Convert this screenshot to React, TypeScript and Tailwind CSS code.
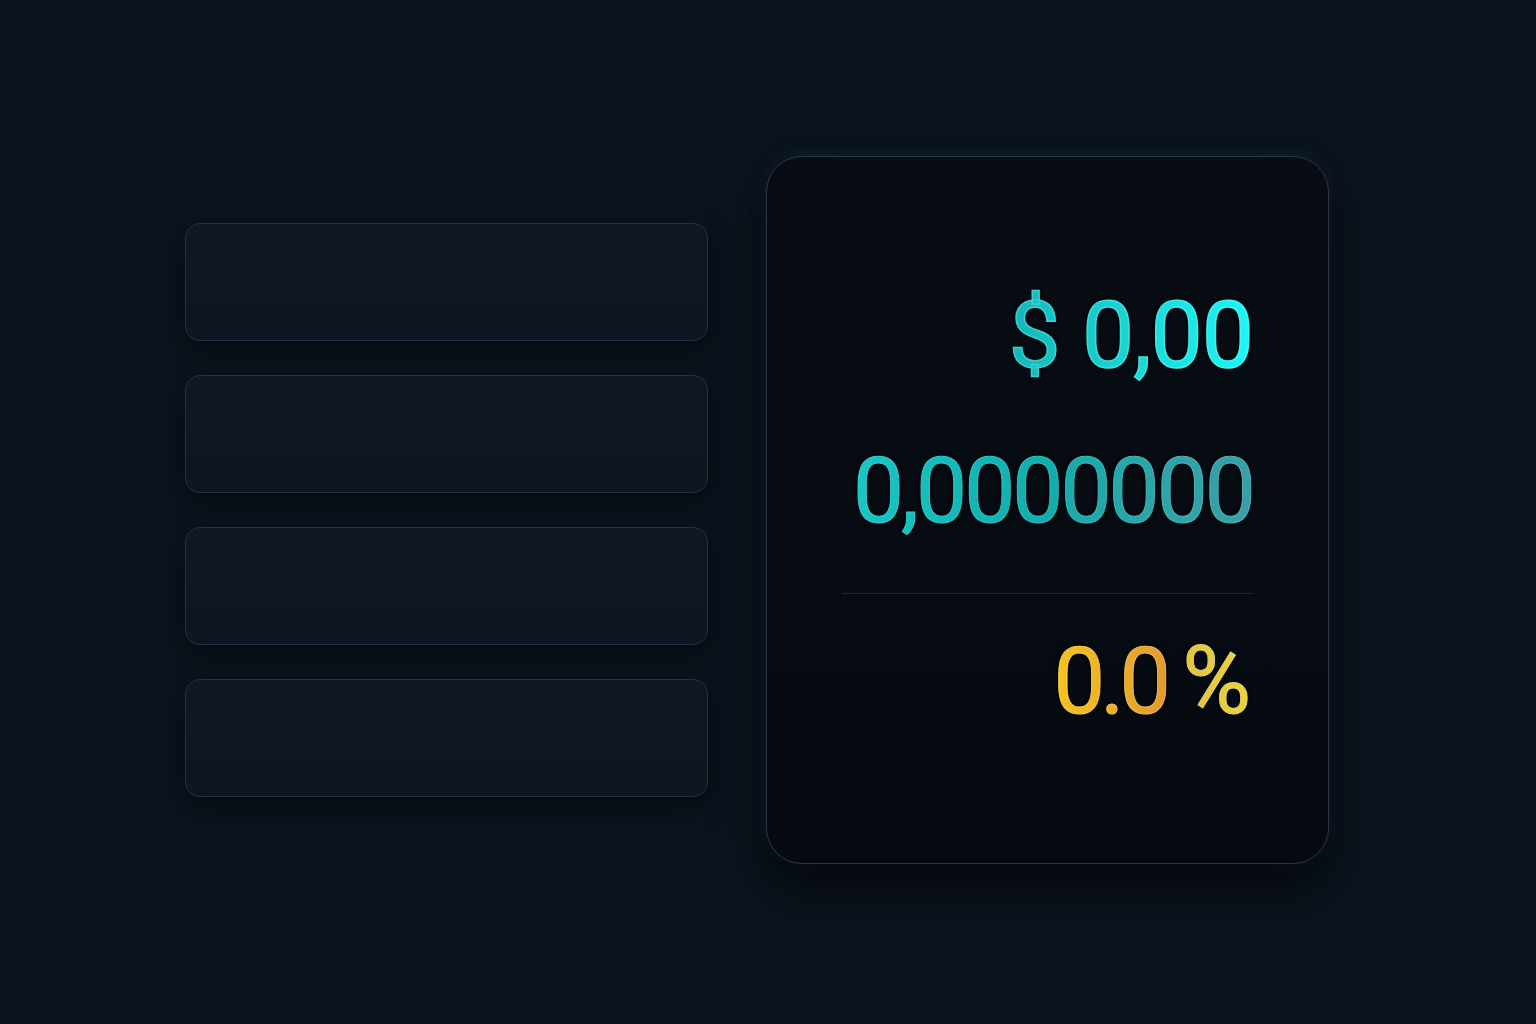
const rows = [0, 1, 2, 3];

const App = () => {
    return (
        <div
            className="h-screen w-full flex items-center pl-[185px] pb-[4px] bg-[#0b131d] overflow-hidden"
            style={{ fontFamily: 'Roboto, "Noto Sans", sans-serif' }}
        >
            {/* Empty input rows */}
            <div className="flex flex-col gap-[34px] w-[523px]">
                {rows.map((r) => (
                    <div
                        key={r}
                        className="h-[118px] rounded-[15px] border border-[#233244] bg-gradient-to-b from-[#0f1824] to-[#0d1620] shadow-[0_10px_24px_rgba(0,0,0,0.45)]"
                    />
                ))}
            </div>

            {/* Result card */}
            <div className="ml-[58px] w-[563px] h-[708px] rounded-[36px] border border-[#283847] bg-gradient-to-b from-[#080d14] to-[#060a10] shadow-[0_-4px_18px_rgba(40,120,160,0.12),0_24px_50px_rgba(0,0,0,0.6)] flex flex-col px-[75px]">
                <div className="mt-[132px] flex justify-end">
                    <span className="text-[93px] leading-[1] tracking-[-1px] bg-gradient-to-r from-[#16b6b6] to-[#1ef6f6] bg-clip-text text-transparent [-webkit-text-stroke:1.5px_rgba(140,255,255,0.3)] drop-shadow-[0_0_2px_rgba(0,0,0,1)]">
                        $ 0,00
                    </span>
                </div>
                <div className="mt-[64px] flex justify-end">
                    <span className="text-[91px] leading-[1] tracking-[-3px] bg-gradient-to-r from-[#19c6c6] via-[#13abab] to-[#3a9ea6] bg-clip-text text-transparent [-webkit-text-stroke:1px_rgba(140,255,255,0.2)] drop-shadow-[0_0_2px_rgba(0,0,0,1)]">
                        0,0000000
                    </span>
                </div>
                <div className="mt-[56px] h-px bg-[#1c2835]" />
                <div className="mt-[40px] flex justify-end items-baseline">
                    <span className="text-[92px] leading-[1] tracking-[-5px] bg-gradient-to-r from-[#f6c41e] to-[#e09c2e] bg-clip-text text-transparent [-webkit-text-stroke:1px_rgba(255,240,180,0.3)] drop-shadow-[0_0_2px_rgba(0,0,0,1)]">
                        0.0
                    </span>
                    <span className="ml-[16px] mr-[2px] text-[94px] leading-[1] bg-gradient-to-r from-[#e6c23a] to-[#f2d22e] bg-clip-text text-transparent [-webkit-text-stroke:1px_rgba(170,230,255,0.35)] drop-shadow-[0_0_2px_rgba(0,0,0,1)]">
                        %
                    </span>
                </div>
            </div>
        </div>
    );
};

export default App;
